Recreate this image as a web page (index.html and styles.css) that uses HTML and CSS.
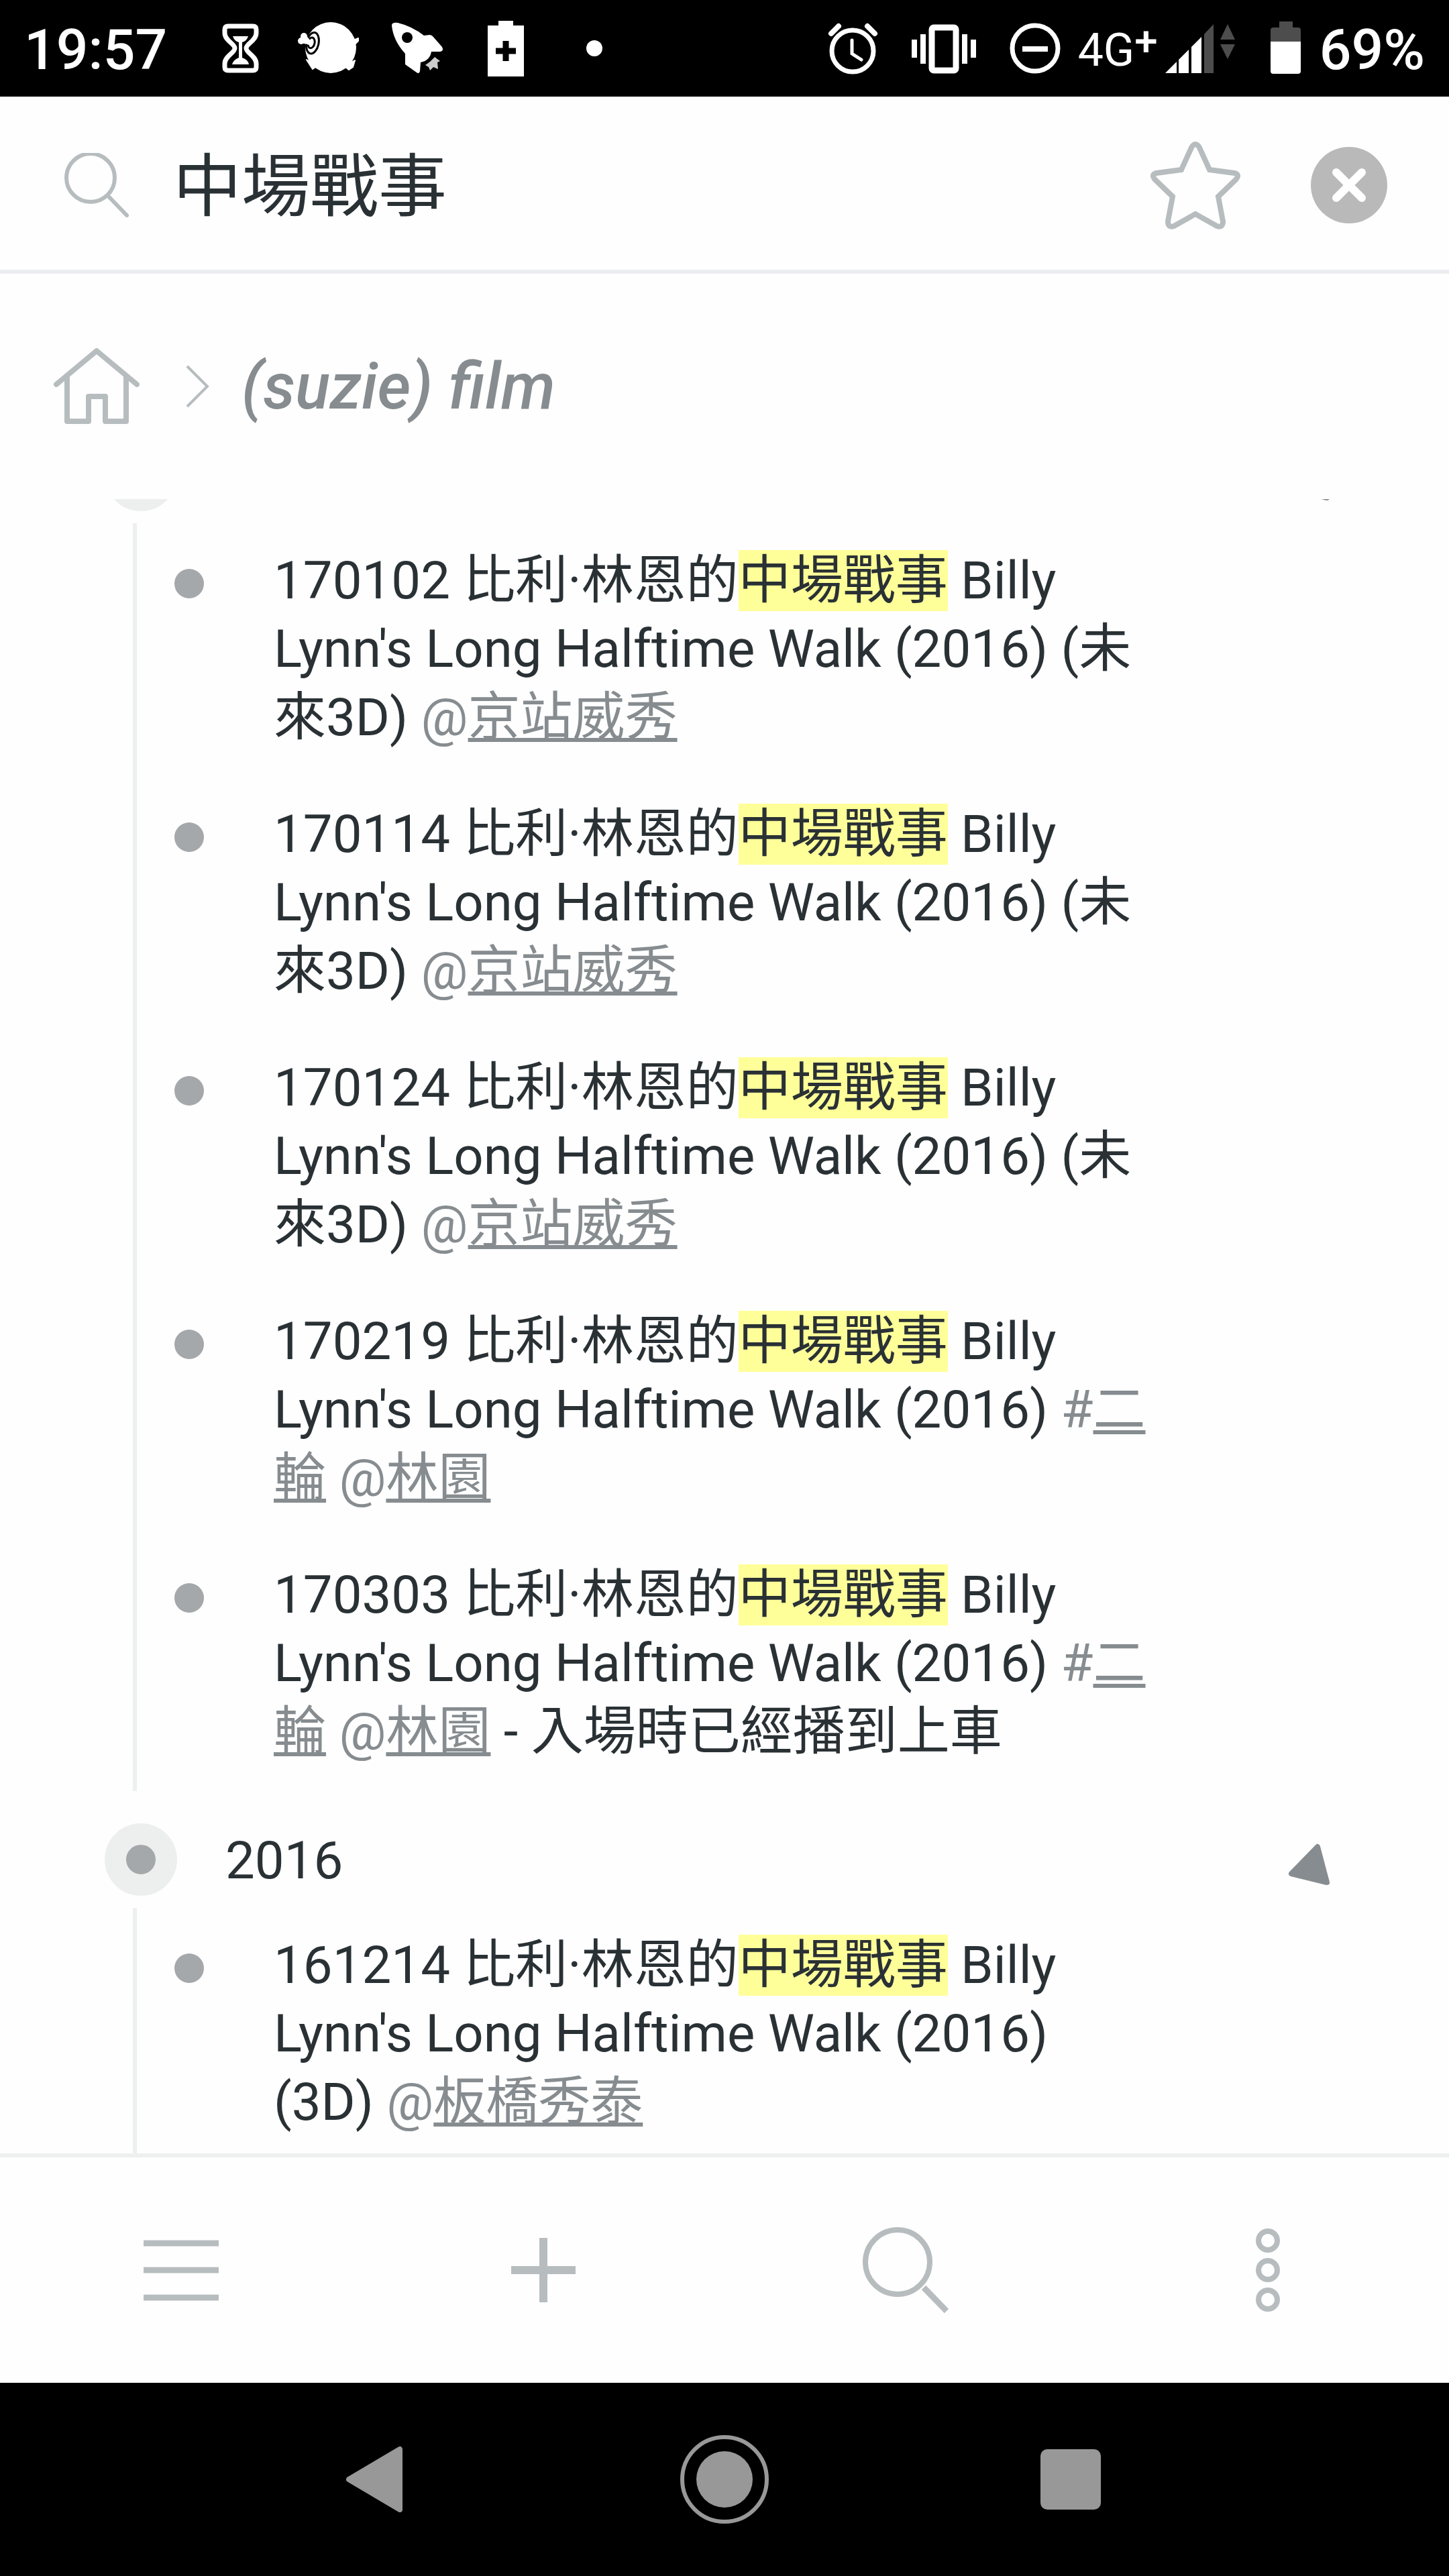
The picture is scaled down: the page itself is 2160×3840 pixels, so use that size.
FILE: index.html
```html
<!DOCTYPE html>
<html lang="zh-Hant">
<head>
    <meta charset="UTF-8">
    <meta name="viewport" content="width=device-width, initial-scale=1.0">
    <title>(suzie) film</title>
    <link rel="stylesheet" href="styles.css">
</head>
<body>
    <div class="status-bar">
        <span class="status-text clock">19:57</span>
        <div class="notifications">
            <svg class="status-icon" viewBox="0 0 96 96">
                <path d="M30 15H67Q72 15 72 20V25C72 37 57 41 57 48C57 55 72 59 72 71V76Q72 81 67 81H30Q25 81 25 76V71C25 59 40 55 40 48C40 41 25 37 25 25V20Q25 15 30 15Z" fill="none" stroke="#fff" stroke-width="7"/>
                <path d="M37 30H60Q58 37 51 39V62Q60 65 61 72H36Q38 65 46 62V39Q39 37 37 30Z" fill="#fff"/>
            </svg>
            <svg class="status-icon" viewBox="0 0 96 96">
                <circle cx="51" cy="47" r="38" fill="#fff"/>
                <path d="M85 36L92 33V37L88 41ZM15 65L24 79L31 74ZM87 66L84 76L78 80L72 75Z" fill="#fff" stroke="#fff" stroke-width="2" stroke-linejoin="round"/>
                <g fill="none" stroke="#000" stroke-width="3" transform="rotate(12 23 40)">
                    <ellipse cx="24" cy="40" rx="9" ry="16"/>
                    <ellipse cx="22" cy="40" rx="5" ry="8"/>
                </g>
                <path d="M9 37L20 39M11 30L18 39" stroke="#fff" stroke-width="7" stroke-linecap="round"/>
                <circle cx="11" cy="30" r="5" fill="#fff"/>
                <circle cx="7" cy="37" r="5" fill="#fff"/>
            </svg>
            <svg class="status-icon" viewBox="0 0 96 96">
                <path d="M10 14Q10 9 19 10Q40 15 58 29L66 28Q69 28 71 30L85 46Q88 52 82 53H69Q67 66 53 69L52 82Q51 87 47 84L30 72V56Q12 36 10 14Z" fill="#fff"/>
                <circle cx="33" cy="32" r="8" fill="#000"/>
                <path d="M74 61L82 67L78 69L79 79L72 76L67 81L65 76L60 73L67 68Z" fill="#ccc"/>
            </svg>
            <svg class="status-icon" viewBox="0 0 96 96">
                <path d="M37 7H59V14H75V90H21V14H37Z" fill="#fff"/>
                <path d="M33 52H63M48 37V67" stroke="#000" stroke-width="9"/>
            </svg>
            <svg class="status-icon" viewBox="0 0 96 96">
                <circle cx="48" cy="48" r="12" fill="#fff"/>
            </svg>
        </div>
        <div class="system">
            <svg class="status-icon" viewBox="0 0 96 96" fill="none" stroke="#fff">
                <circle cx="48" cy="52" r="31" stroke-width="7"/>
                <path d="M27 15L16 26M70 15L81 26" stroke-width="8" stroke-linecap="round"/>
                <path d="M47 36V56L61 65" stroke-width="5" stroke-linecap="round"/>
            </svg>
            <svg class="status-icon" viewBox="0 0 96 96">
                <rect x="30" y="17" width="36" height="64" rx="3" fill="none" stroke="#fff" stroke-width="9"/>
                <path d="M17 27V71M4 35V62M79 27V71M92 35V62" stroke="#fff" stroke-width="8"/>
            </svg>
            <svg class="status-icon" viewBox="0 0 96 96" fill="none" stroke="#fff">
                <circle cx="48" cy="48" r="34" stroke-width="7"/>
                <path d="M29 49H67" stroke-width="8"/>
            </svg>
            <span class="network">4G<sup>+</sup></span>
            <svg class="signal-icon" viewBox="0 0 112 96">
                <path d="M2 85L19 68V85ZM22 85V65L37 50V85ZM41 85V46L56 31V85Z" fill="#fff"/>
                <path d="M60 85V27L74 12V85ZM84 35L95 12L106 35ZM84 42H106L95 64Z" fill="#4d4d4d"/>
            </svg>
            <svg class="battery-icon" viewBox="0 0 48 96">
                <path d="M14 8H34V17H42Q46 17 46 21V38H1V21Q1 17 5 17H14Z" fill="#4d4d4d"/>
                <path d="M1 38H46V82Q46 86 42 86H5Q1 86 1 82Z" fill="#fff"/>
            </svg>
            <span class="status-text">69%</span>
        </div>
    </div>

    <header class="search-bar">
        <label for="search">
            <svg class="search-icon" viewBox="0 0 96 96" fill="none" stroke="#b7bdbf" stroke-width="6">
                <circle cx="39" cy="37" r="36"/>
                <path d="M66 65L93 93" stroke-linecap="round"/>
            </svg>
        </label>
        <input type="text" id="search" class="search-input" value="中場戰事">
        <button class="star-button" aria-label="Star">
            <svg viewBox="0 0 144 144" fill="none" stroke="#b7bdbf" stroke-width="8">
                <path d="M93 49L78 16Q72 6 66 16L51 49L14 54Q5 56 12 64L38 89L31 126Q31 136 40 133L72 115L104 133Q113 136 113 126L106 89L132 64Q139 56 130 54Z"/>
            </svg>
        </button>
        <button class="clear-button" aria-label="Clear">
            <svg viewBox="0 0 114 114">
                <circle cx="57" cy="57" r="57" fill="#b9b9b9"/>
                <path d="M38 38L76 76M76 38L38 76" stroke="#fff" stroke-width="12" stroke-linecap="round"/>
            </svg>
        </button>
    </header>

    <nav class="breadcrumb">
        <a href="#" aria-label="Home">
            <svg class="home-icon" viewBox="0 0 128 120" fill="none" stroke="#b7bdbf" stroke-width="8" stroke-linejoin="round">
                <path d="M4 57L64 7L124 57" stroke-linecap="round"/>
                <path d="M20 45V112H52V75H77V112H108V45"/>
            </svg>
        </a>
        <svg class="chevron-icon" viewBox="0 0 36 72" fill="none" stroke="#b7bdbf" stroke-width="4">
            <path d="M2 6L32 36L2 66"/>
        </svg>
        <a href="#" class="crumb">(suzie) film</a>
    </nav>

    <main class="outline">
        <div class="node">
            <span class="bullet collapsed"></span>
            <span class="node-title"></span>
            <button class="toggle" aria-label="Collapse">
                <svg viewBox="0 0 72 72"><path d="M44 11L58 64L5 51Z" fill="#868c8f" stroke="#868c8f" stroke-width="8" stroke-linejoin="round"/></svg>
            </button>
        </div>
        <ul class="children">
            <li><span class="bullet"></span><p>170102 比利·林恩的<mark>中場戰事</mark> Billy Lynn's Long Halftime Walk (2016) (未來3D) <span class="tag">@<a href="#">京站威秀</a></span></p></li>
            <li><span class="bullet"></span><p>170114 比利·林恩的<mark>中場戰事</mark> Billy Lynn's Long Halftime Walk (2016) (未來3D) <span class="tag">@<a href="#">京站威秀</a></span></p></li>
            <li><span class="bullet"></span><p>170124 比利·林恩的<mark>中場戰事</mark> Billy Lynn's Long Halftime Walk (2016) (未來3D) <span class="tag">@<a href="#">京站威秀</a></span></p></li>
            <li><span class="bullet"></span><p>170219 比利·林恩的<mark>中場戰事</mark> Billy Lynn's Long Halftime Walk (2016) <span class="tag">#<a href="#">二輪</a></span> <span class="tag">@<a href="#">林園</a></span></p></li>
            <li><span class="bullet"></span><p>170303 比利·林恩的<mark>中場戰事</mark> Billy Lynn's Long Halftime Walk (2016) <span class="tag">#<a href="#">二輪</a></span> <span class="tag">@<a href="#">林園</a></span> - 入場時已經播到上車</p></li>
        </ul>
        <div class="node">
            <span class="bullet collapsed"></span>
            <span class="node-title">2016</span>
            <button class="toggle" aria-label="Collapse">
                <svg viewBox="0 0 72 72"><path d="M44 11L58 64L5 51Z" fill="#868c8f" stroke="#868c8f" stroke-width="8" stroke-linejoin="round"/></svg>
            </button>
        </div>
        <ul class="children">
            <li><span class="bullet"></span><p>161214 比利·林恩的<mark>中場戰事</mark> Billy Lynn's Long Halftime Walk (2016) (3D) <span class="tag">@<a href="#">板橋秀泰</a></span></p></li>
        </ul>
    </main>

    <footer class="toolbar">
        <button aria-label="Menu">
            <svg viewBox="0 0 128 128" stroke="#b7bdbf" stroke-width="9"><path d="M8 24H120M8 64H120M8 105H120"/></svg>
        </button>
        <button aria-label="Add">
            <svg viewBox="0 0 128 128" stroke="#b7bdbf" stroke-width="12"><path d="M16 64H112M64 16V112"/></svg>
        </button>
        <button aria-label="Search">
            <svg viewBox="0 0 128 128" fill="none" stroke="#b7bdbf">
                <circle cx="52" cy="52" r="48" stroke-width="8"/>
                <path d="M91 90L125 125" stroke-width="9"/>
            </svg>
        </button>
        <button aria-label="More">
            <svg viewBox="0 0 128 128" fill="none" stroke="#b7bdbf" stroke-width="8">
                <circle cx="64" cy="20" r="14"/>
                <circle cx="64" cy="64" r="14"/>
                <circle cx="64" cy="108" r="14"/>
            </svg>
        </button>
    </footer>

    <div class="system-nav">
        <button aria-label="Back">
            <svg viewBox="0 0 136 136"><path d="M24 68L100 23V113Z" fill="#989898" stroke="#989898" stroke-width="8" stroke-linejoin="round"/></svg>
        </button>
        <button aria-label="Home">
            <svg viewBox="0 0 136 136">
                <circle cx="68" cy="68" r="63" fill="none" stroke="#989898" stroke-width="6"/>
                <circle cx="68" cy="68" r="42" fill="#989898"/>
            </svg>
        </button>
        <button aria-label="Recent apps">
            <svg viewBox="0 0 136 136"><rect x="23" y="23" width="90" height="90" rx="10" fill="#989898"/></svg>
        </button>
    </div>
</body>
</html>
```
FILE: styles.css
```css
* {
    box-sizing: border-box;
}
body {
    margin: 0;
    height: 100vh;
    display: flex;
    flex-direction: column;
    background-color: #fefefe;
    color: #2a3135;
    font-family: Roboto, "Noto Sans CJK TC", sans-serif;
    font-size: 78px;
    line-height: 102px;
    overflow: hidden;
}
button {
    padding: 0;
    border: none;
    background: none;
    cursor: pointer;
}
svg {
    display: block;
    flex: none;
}

/* status bar */
.status-bar {
    flex: none;
    height: 144px;
    padding: 0 36px;
    display: flex;
    align-items: center;
    background-color: #000;
    color: #fff;
}
.status-text {
    padding-top: 6px;
    font-size: 84px;
    font-weight: 500;
}
.clock {
    width: 274px;
}
.notifications, .system {
    display: flex;
    align-items: center;
    gap: 36px;
}
.system {
    margin-left: auto;
    gap: 40px;
}
.status-icon {
    width: 96px;
    height: 96px;
}
.network {
    width: 120px;
    margin: 0 -32px 0 -24px;
    padding-top: 6px;
    font-size: 68px;
    white-space: nowrap;
}
.network sup {
    font-size: 62px;
    font-weight: 500;
    line-height: 0;
    vertical-align: 16px;
}
.signal-icon {
    width: 112px;
    height: 96px;
    margin-right: 6px;
}
.battery-icon {
    width: 48px;
    height: 96px;
    margin-right: -14px;
}

/* search */
.search-bar {
    flex: none;
    height: 264px;
    padding: 6px 92px 0 96px;
    display: flex;
    align-items: center;
    border-bottom: 6px solid #ecedf0;
}
.search-icon {
    width: 96px;
    height: 96px;
}
.search-input {
    flex: 1;
    min-width: 0;
    margin: 0 66px;
    padding: 6px 0 0;
    border: none;
    outline: none;
    background: none;
    color: inherit;
    font-family: inherit;
    font-size: 102px;
    line-height: 120px;
}
.star-button {
    width: 144px;
    margin-right: 100px;
}
.clear-button {
    width: 114px;
}

/* breadcrumb */
.breadcrumb {
    flex: none;
    height: 336px;
    padding: 0 80px;
    display: flex;
    align-items: center;
}
.home-icon {
    width: 128px;
    height: 120px;
}
.chevron-icon {
    width: 36px;
    height: 72px;
    margin: 0 47px 0 69px;
}
.crumb {
    color: #868c8f;
    font-size: 96px;
    font-weight: 500;
    font-style: italic;
    text-decoration: none;
}

/* outline, scrolled past the first heading */
.outline {
    flex: 1;
    min-height: 0;
    overflow: hidden;
}
.outline .node:first-child {
    margin-top: -138px;
}
.node {
    height: 174px;
    padding: 0 168px 0 156px;
    display: flex;
    align-items: center;
}
.bullet {
    flex: none;
    width: 44px;
    height: 44px;
    border-radius: 50%;
    background-color: #a4a8aa;
}
.collapsed {
    width: 108px;
    height: 108px;
    margin-top: 30px;
    border: 32px solid #edefee;
}
.node-title {
    flex: 1;
    margin: 34px 0 0 72px;
}
.toggle {
    width: 72px;
    height: 72px;
    margin-top: 42px;
}
.children {
    list-style: none;
    margin: 0 0 0 198px;
    padding: 35px 444px 37px 56px;
    border-left: 6px solid #eeefef;
}
.children li {
    display: flex;
    gap: 104px;
}
.children li + li {
    margin-top: 72px;
}
.children .bullet {
    margin-top: 33px;
}
.children p {
    margin: 0;
}
mark {
    background-color: #ffff99;
    color: inherit;
}
.tag, .tag a {
    color: #868c8f;
}
.tag a {
    text-decoration: underline;
    text-decoration-thickness: 6px;
    text-underline-offset: 4px;
    text-decoration-skip-ink: none;
}

/* toolbar */
.toolbar {
    flex: none;
    height: 342px;
    display: grid;
    grid-template-columns: repeat(4, 1fr);
    justify-items: center;
    border-top: 6px solid #eeefef;
}
.toolbar svg {
    width: 128px;
    height: 128px;
}

/* android navigation */
.system-nav {
    flex: none;
    height: 288px;
    display: flex;
    justify-content: center;
    align-items: center;
    gap: 380px;
    background-color: #000;
}
.system-nav svg {
    width: 136px;
    height: 136px;
}
```
